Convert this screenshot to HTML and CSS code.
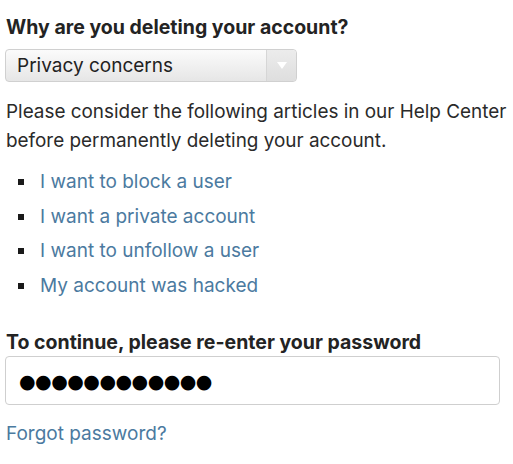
FILE: index.html
```html
<!DOCTYPE html>
<html>
<head>
<meta charset="utf-8">
<link rel="stylesheet" href="styles.css">
</head>
<body>
<div class="page">
  <h2 class="label">Why are you deleting your account?</h2>
  <div class="select">
    <span class="select-text">Privacy concerns</span>
    <span class="select-arrow"><span class="tri"></span></span>
  </div>
  <p class="intro">Please consider the following articles in our Help Center before permanently deleting your account.</p>
  <ul class="articles">
    <li><a href="#">I want to block a user</a></li>
    <li><a href="#">I want a private account</a></li>
    <li><a href="#">I want to unfollow a user</a></li>
    <li><a href="#">My account was hacked</a></li>
  </ul>
  <h2 class="label label-pw">To continue, please re-enter your password</h2>
  <div class="input"><span class="dots">●●●●●●●●●●●●</span></div>
  <a class="forgot" href="#">Forgot password?</a>
</div>
</body>
</html>
```
FILE: styles.css
```css
html, body { margin: 0; padding: 0; background: #fff; }
body { font-family: Inter, "Noto Sans", sans-serif; color: #262626; }
.page { padding: 14px 0 0 6px; display: flex; flex-direction: column; align-items: flex-start; }
.label { margin: 0; font-size: 19.5px; font-weight: 700; line-height: 26px; color: #232323; }
.select {
  margin: 9px 0 0 -1px; width: 290px; height: 31px;
  border: 1px solid #d0d0d0; border-radius: 4px;
  background: linear-gradient(#fbfbfb, #e6e6e6);
  display: flex; align-items: center; box-sizing: content-box;
}
.select-text { flex: 1; padding-left: 11px; font-size: 19px; color: #222; }
.select-arrow { width: 29px; height: 100%; border-left: 1px solid #d6d6d6; background: linear-gradient(#ececec, #dedede); display: flex; align-items: center; justify-content: center; border-radius: 0 4px 4px 0; }
.tri { width: 0; height: 0; border-left: 5px solid transparent; border-right: 5px solid transparent; border-top: 7px solid #fff; }
.intro { margin: 15px 0 0 0; font-size: 18.9px; line-height: 29px; color: #2a2a2a; width: 510px; }
.articles { margin: 10px 0 0 0; padding: 0; list-style: none; }
.articles li { font-size: 19px; line-height: 34.5px; color: #222; display: flex; align-items: center; }
.articles li::before { content: ""; width: 6px; height: 6px; background: #1a1a1a; margin: 0 16px 0 12px; }
.articles a, .forgot { color: #4b7aa0; text-decoration: none; }
.label-pw { margin-top: 26px; }
.input { margin: 1px 0 0 -1px; width: 493px; height: 47px; border: 1px solid #cfcfcf; border-radius: 4px; display: flex; align-items: center; box-sizing: content-box; }
.dots { padding-left: 13px; font-size: 19px; color: #000; letter-spacing: -0.5px; font-family: "DejaVu Sans", sans-serif; }
.forgot { margin-top: 17px; font-size: 19px; line-height: 24px; }
```
